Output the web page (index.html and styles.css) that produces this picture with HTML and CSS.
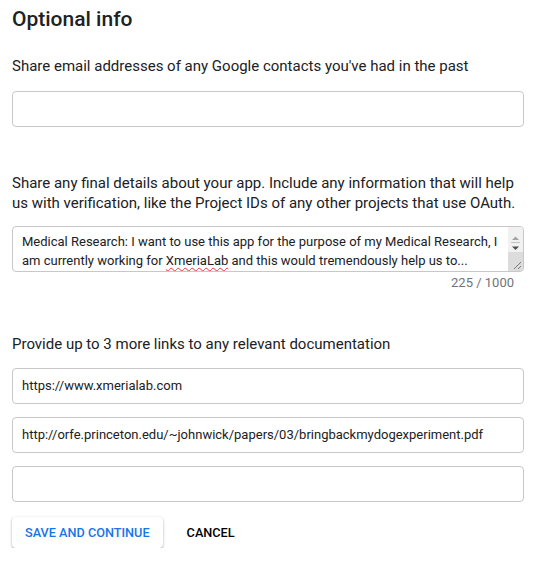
FILE: index.html
```html
<!DOCTYPE html>
<html>
<head>
<meta charset="utf-8">
<link rel="stylesheet" href="styles.css">
</head>
<body>
<div class="page">
  <h1 class="title">Optional info</h1>

  <div class="label label-first">Share email addresses of any Google contacts you've had in the past</div>
  <div class="field"></div>

  <div class="label label-second">Share any final details about your app. Include any information that will help us with verification, like the Project IDs of any other projects that use OAuth.</div>
  <div class="textarea">
    <div class="ta-text">Medical Research: I want to use this app for the purpose of my Medical Research, I am currently working for <span class="spell">XmeriaLab</span> and this would tremendously help us to...</div>
    <svg class="ta-scroll" width="15" height="44" viewBox="0 0 15 44">
      <rect x="0" y="0" width="15" height="25" fill="#f1f1f1"/>
      <polygon points="4,13 11,13 7.5,9.5" fill="#a3a3a3"/>
      <line x1="3" y1="15.5" x2="12" y2="15.5" stroke="#c4c4c4" stroke-width="1"/>
      <polygon points="4,19.5 11,19.5 7.5,23" fill="#505050"/>
      <rect x="0" y="25" width="15" height="19" fill="#dcdcdc"/>
      <line x1="13" y1="35" x2="6" y2="42" stroke="#7a7a7a" stroke-width="1"/>
      <line x1="13" y1="39" x2="10" y2="42" stroke="#7a7a7a" stroke-width="1"/>
    </svg>
  </div>
  <div class="counter">225 / 1000</div>

  <div class="label label-third">Provide up to 3 more links to any relevant documentation</div>
  <div class="links">
    <div class="field">https://www.xmerialab.com</div>
    <div class="field">http://orfe.princeton.edu/~johnwick/papers/03/bringbackmydogexperiment.pdf</div>
    <div class="field"></div>
  </div>

  <div class="actions">
    <button class="btn btn-primary">SAVE AND CONTINUE</button>
    <button class="btn btn-text">CANCEL</button>
  </div>
</div>
</body>
</html>
```

FILE: styles.css
```css
html, body {
  margin: 0;
  padding: 0;
  background: #fff;
}
body {
  font-family: Roboto, "Liberation Sans", sans-serif;
  color: #202124;
}
.page {
  padding: 5px 12px 0 12px;
  display: flex;
  flex-direction: column;
}
.title {
  margin: 0;
  font-size: 21px;
  line-height: 28px;
  font-weight: 500;
  color: #202124;
}
.label {
  font-size: 15px;
  line-height: 20px;
  color: #202124;
}
.label-first { margin-top: 23px; margin-bottom: 15px; }
.label-second { margin-top: 46px; margin-bottom: 13px; }
.label-third { margin-top: 43px; margin-bottom: 14px; }
.field {
  box-sizing: border-box;
  height: 36px;
  border: 1px solid #c8c8c8;
  border-radius: 4px;
  padding: 0 9px;
  font-size: 13px;
  line-height: 34px;
  color: #202124;
  white-space: nowrap;
  overflow: hidden;
}
.links {
  display: flex;
  flex-direction: column;
  gap: 13px;
}
.textarea {
  box-sizing: border-box;
  height: 46px;
  border: 1px solid #c8c8c8;
  border-radius: 4px;
  display: flex;
  overflow: hidden;
}
.ta-text {
  flex: 1;
  padding: 5px 3px 0 9px;
  font-size: 13px;
  line-height: 19px;
  color: #202124;
  overflow: hidden;
}
.ta-scroll {
  flex: none;
  display: block;
}
.spell {
  text-decoration: underline wavy #e53935;
  text-decoration-thickness: 1px;
  text-underline-offset: 2px;
}
.counter {
  text-align: right;
  font-size: 13px;
  line-height: 16px;
  color: #70757a;
  padding-right: 10px;
  margin-top: 3px;
}
.actions {
  margin-top: 15px;
  display: flex;
  align-items: center;
  gap: 12px;
}
.btn {
  font-family: Roboto, "Liberation Sans", sans-serif;
  font-size: 12.7px;
  font-weight: 500;
  letter-spacing: 0;
  border: none;
  background: #fff;
  height: 31px;
  border-radius: 4px;
  cursor: pointer;
}
.btn-primary {
  color: #1a73e8;
  padding: 0 13px;
  box-shadow: 0 1px 3px rgba(0,0,0,0.28), 0 1px 1px rgba(0,0,0,0.12);
}
.btn-text {
  color: #000;
  padding: 0 12px;
}
```
